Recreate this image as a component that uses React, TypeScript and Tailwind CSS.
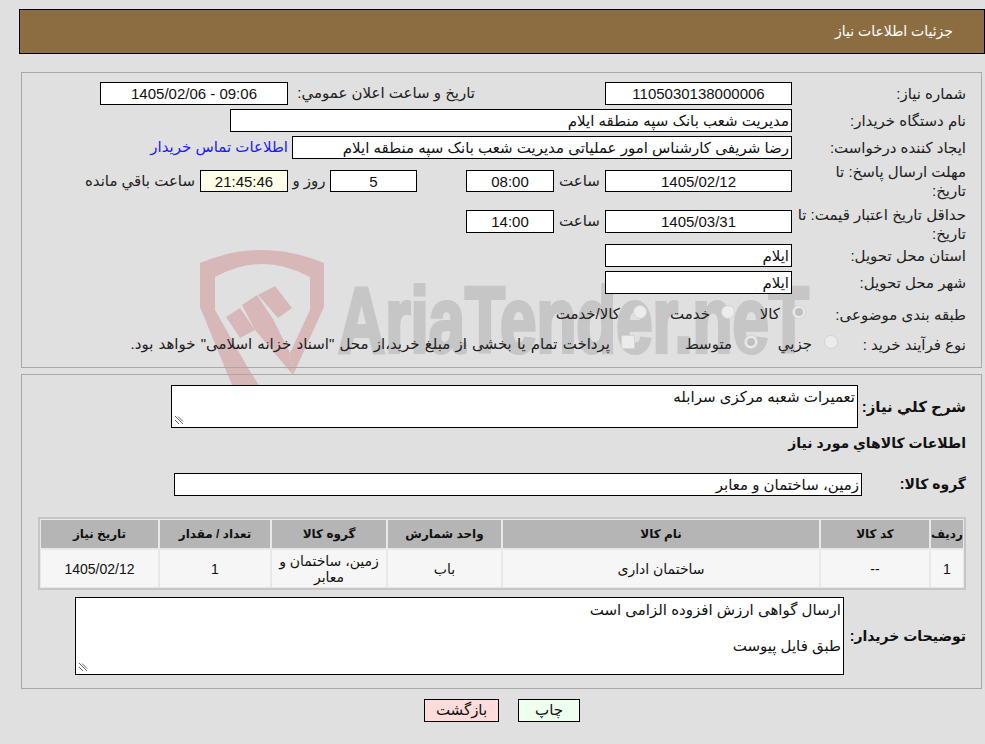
import React from "react";

const font = "font-['Liberation_Sans','DejaVu_Sans',sans-serif]";

function Box({ w, children, center, bg = "bg-white", h = "h-[23px]" }: { w: string; children?: React.ReactNode; center?: boolean; bg?: string; h?: string }) {
  return (
    <div className={`${w} ${h} ${bg} border border-black shrink-0 flex items-center px-[2px] text-[15px] leading-none overflow-hidden whitespace-nowrap text-[#111] ${center ? "justify-center" : ""}`}>
      {children}
    </div>
  );
}

function Radio({ on }: { on?: boolean }) {
  return (
    <span className="w-[14px] h-[14px] mb-[4px] rounded-full border border-[#d4d4d4] bg-[#ececec] flex items-center justify-center shrink-0">
      {on && <span className="w-[8px] h-[8px] rounded-full bg-[#c0c0c0]" />}
    </span>
  );
}

function Label({ children, w = "w-[189px]", className = "" }: { children: React.ReactNode; w?: string; className?: string }) {
  return <div className={`${w} shrink-0 pr-[15px] text-[15px] leading-[19px] text-[#222] ${className}`}>{children}</div>;
}

function Resize() {
  return (
    <svg className="absolute left-[2px] bottom-[2px]" width="10" height="10" viewBox="0 0 10 10">
      <path d="M1 1L9 9M4 1.500L9 6.500M1 5L5 9" stroke="#666" strokeWidth="1" fill="none" />
    </svg>
  );
}

function Watermark() {
  return (
    <div className="absolute left-0 top-0 w-[985px] h-[744px] pointer-events-none overflow-hidden">
      <svg className="absolute left-[200px] top-[250px]" width="125" height="140" viewBox="0 0 125 140">
        <path d="M0 13Q62 -13 124 13L124 57L93 125L90 103L110 60L110 27Q62 1 15 27L15 60L48 118L62 140L34 140L0 57Z" fill="#d8b7b9" />
        <path d="M42 55L57 45L73 69L90 103L93 125L55 80Z" fill="#d8b7b9" />
        <path d="M26 67L40 58L55 80L40 88Z" fill="#d8b7b9" />
        <path d="M58 45L75 36L92 58L78 68Z" fill="#d8b7b9" />
      </svg>
      <div dir="ltr" className="absolute left-[338px] top-[270px] h-[100px] text-[#c6c6c6] font-['Liberation_Sans',sans-serif] font-bold text-[92px] leading-[100px] whitespace-nowrap origin-left scale-x-[0.71] [-webkit-text-stroke:4px_#c6c6c6]">
        AriaTender.neT
      </div>
    </div>
  );
}

const headers = [
  ["w-[32px]", "رديف"],
  ["w-[108px]", "کد کالا"],
  ["w-[316px]", "نام کالا"],
  ["w-[113px]", "واحد شمارش"],
  ["w-[114px]", "گروه کالا"],
  ["w-[110px]", "تعداد / مقدار"],
  ["w-[117px]", "تاريخ نياز"],
];
const cells: [string, string][] = [
  ["w-[32px]", "1"],
  ["w-[108px]", "--"],
  ["w-[316px]", "ساختمان اداری"],
  ["w-[113px]", "باب"],
  ["w-[114px]", "زمین، ساختمان و معابر"],
  ["w-[110px]", "1"],
  ["w-[117px]", "1405/02/12"],
];

export default function App() {
  return (
    <div dir="rtl" className={`relative w-[985px] h-[744px] bg-[#e0e0e0] overflow-hidden text-[#222] ${font}`}>
      <Watermark />
      <div className="relative flex flex-col pt-[9px] pl-[19px]">
        <div className="h-[45px] bg-[#8c6d42] border border-black flex items-center pr-[31px] text-white text-[14px]">
          جزئیات اطلاعات نیاز
        </div>

        <div className="ml-[2px] mr-[3px] mt-[18px] h-[296px] border border-[#a8a8a8] flex flex-col pt-[9px]">
          <div className="flex items-center h-[23px]">
            <Label>شماره نیاز:</Label>
            <Box w="w-[187px]" center>1105030138000006</Box>
            <div className="w-[130px]" />
            <div className="w-[187px] text-[15px] whitespace-nowrap">تاريخ و ساعت اعلان عمومي:</div>
            <Box w="w-[188px]" center>09:06 - 1405/02/06</Box>
          </div>
          <div className="flex items-center h-[23px] mt-[4px]">
            <Label>نام دستگاه خریدار:</Label>
            <Box w="w-[562px]">مدیریت شعب بانک سپه منطقه ایلام</Box>
          </div>
          <div className="flex items-center h-[23px] mt-[4px]">
            <Label>ایجاد کننده درخواست:</Label>
            <Box w="w-[500px]">رضا شریفی کارشناس امور عملیاتی مدیریت شعب بانک سپه منطقه ایلام</Box>
            <div className="mr-[4px] text-[15px] text-[#1a1aff] whitespace-nowrap">اطلاعات تماس خریدار</div>
          </div>
          <div className="flex items-center h-[38px] mt-[3px]">
            <Label>مهلت ارسال پاسخ: تا<br />تاریخ:</Label>
            <Box w="w-[187px]" h="h-[22px]" center>1405/02/12</Box>
            <div className="w-[51px] text-[15px] text-center">ساعت</div>
            <Box w="w-[88px]" h="h-[22px]" center>08:00</Box>
            <div className="w-[49px]" />
            <Box w="w-[87px]" h="h-[22px]" center>5</Box>
            <div className="w-[42px] text-[15px] text-center">روز و</div>
            <Box w="w-[88px]" h="h-[22px]" center bg="bg-[#ffffe8]">21:45:46</Box>
            <div className="mr-[5px] text-[15px] whitespace-nowrap">ساعت باقي مانده</div>
          </div>
          <div className="flex items-center h-[43px]">
            <Label className="pt-[4px]">حداقل تاریخ اعتبار قیمت: تا<br />تاریخ:</Label>
            <Box w="w-[187px]" center>1405/03/31</Box>
            <div className="w-[51px] text-[15px] text-center">ساعت</div>
            <Box w="w-[88px]" center>14:00</Box>
          </div>
          <div className="flex items-center h-[23px] mt-[1px]">
            <Label>استان محل تحویل:</Label>
            <Box w="w-[187px]">ایلام</Box>
          </div>
          <div className="flex items-center h-[23px] mt-[4px]">
            <Label>شهر محل تحویل:</Label>
            <Box w="w-[187px]">ایلام</Box>
          </div>
          <div className="flex items-center h-[24px] mt-[8px] text-[15px]">
            <Label w="w-[175px]">طبقه بندی موضوعی:</Label>
            <Radio on />
            <div className="w-[45px] mr-[12px]">کالا</div>
            <Radio />
            <div className="w-[63px] mr-[11px]">خدمت</div>
            <Radio />
            <div className="mr-[13px]">کالا/خدمت</div>
          </div>
          <div className="flex items-center h-[24px] mt-[6px] text-[15px]">
            <Label w="w-[143px]">نوع فرآیند خرید :</Label>
            <Radio />
            <div className="w-[54px] mr-[12px]">جزيي</div>
            <Radio on />
            <div className="w-[97px] mr-[12px]">متوسط</div>
            <span className="w-[14px] h-[14px] mb-[4px] rounded-[2px] border border-[#d4d4d4] bg-[#ececec] shrink-0" />
            <div className="mr-[11px] whitespace-nowrap [word-spacing:1px]">پرداخت تمام یا بخشی از مبلغ خرید،از محل "اسناد خزانه اسلامی" خواهد بود.</div>
          </div>
        </div>

        <div className="ml-[2px] mr-[3px] mt-[6px] h-[315px] border border-[#a8a8a8] flex flex-col">
          <div className="flex items-start mt-[10px] h-[43px]">
            <div className="w-[123px] pr-[15px] shrink-0 font-bold text-[15px] leading-[43px] text-[#111] whitespace-nowrap">شرح کلي نياز:</div>
            <div className="relative w-[687px] h-[43px] bg-white border border-black px-[2px] text-[15px] leading-[22px] text-[#111]">
              تعمیرات شعبه مرکزی سرابله
              <Resize />
            </div>
          </div>
          <div className="h-[30px] pr-[15px] font-bold text-[14px] leading-[30px] text-[#111]">اطلاعات کالاهاي مورد نياز</div>
          <div className="flex items-center mt-[15px] h-[23px]">
            <div className="w-[119px] pr-[15px] shrink-0 font-bold text-[14px] text-[#111] whitespace-nowrap">گروه کالا:</div>
            <Box w="w-[688px]">زمین، ساختمان و معابر</Box>
          </div>
          <div className="mr-[15px] mt-[21px] w-[928px] border-2 border-[#c6c6c6] bg-[#e8e8e8] p-[1px] flex flex-col gap-[2px]">
            <div className="flex gap-[2px] h-[28px]">
              {headers.map(([w, t], i) => (
                <div key={i} className={`${w} shrink-0 bg-[#b5b5b5] flex items-center justify-center font-bold text-[12px] text-[#111] whitespace-nowrap`}>{t}</div>
              ))}
            </div>
            <div className="flex gap-[2px] h-[37px]">
              {cells.map(([w, t], i) => (
                <div key={i} className={`${w} shrink-0 bg-[#f6f6f6] flex items-center justify-center text-center text-[14px] leading-[16px] text-[#111] px-[5px]`}>{t}</div>
              ))}
            </div>
          </div>
          <div className="flex items-start mt-[7px]">
            <div className="w-[137px] pr-[15px] shrink-0 font-bold text-[14px] leading-[78px] text-[#111] whitespace-nowrap">توضیحات خریدار:</div>
            <div className="relative w-[769px] h-[78px] bg-white border border-black px-[2px] pt-[3px] text-[15px] leading-[18px] text-[#111]">
              <div>ارسال گواهی ارزش افزوده الزامی است</div>
              <div className="mt-[18px]">طبق فایل پیوست</div>
              <Resize />
            </div>
          </div>
        </div>

        <div className="flex justify-center gap-[19px] mt-[10px]">
          <div className="w-[62px] h-[23px] bg-[#efffef] border border-black flex items-center justify-center text-[15px] text-[#111]">چاپ</div>
          <div className="w-[75px] h-[23px] bg-[#ffdcdc] border border-black flex items-center justify-center text-[15px] text-[#111]">بازگشت</div>
        </div>
      </div>
    </div>
  );
}
